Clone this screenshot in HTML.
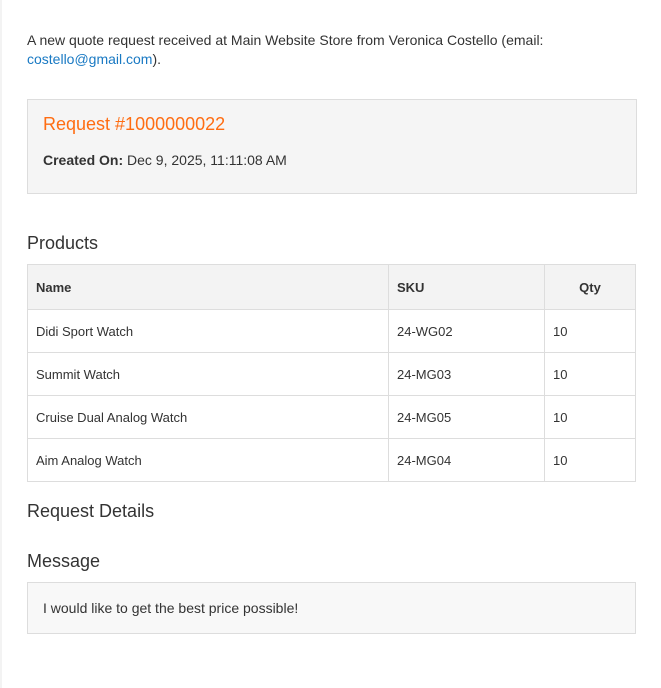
<!DOCTYPE html>
<html><head><meta charset="utf-8"><style>
*{margin:0;padding:0;box-sizing:border-box}
body{width:661px;height:688px;background:#fff;font-family:"Liberation Sans",Arial,sans-serif;color:#333;position:relative;overflow:hidden}
.strip{position:absolute;left:0;top:0;width:2px;height:688px;background:#f3f3f3}
.a{position:absolute}
p.intro{left:27px;top:31px;font-size:14px;line-height:19px;width:600px}
a{color:#1979c3;text-decoration:none}
.box{left:27px;top:99px;width:610px;height:95px;background:#f5f5f5;border:1px solid #ddd}
.title{left:43px;top:114px;font-size:18px;color:#ff6d12}
.created{left:43px;top:152px;font-size:14px}
h2{position:absolute;font-weight:normal;font-size:18px;color:#333;left:27px}
table{position:absolute;left:27px;top:264px;width:609px;border-collapse:collapse;font-size:13px}
td,th{border:1px solid #ddd;padding:0 8px;height:43px;text-align:left;vertical-align:middle}
th{background:#f3f3f3;height:45px;font-weight:bold;font-size:13px}
th.q{text-align:center}
.msg{left:27px;top:582px;width:609px;height:52px;background:#f8f8f8;border:1px solid #ddd;font-size:14px;padding:17px 15px}
</style></head><body>
<div class="strip"></div>
<p class="a intro">A new quote request received at Main Website Store from Veronica Costello (email: <a>costello@gmail.com</a>).</p>
<div class="a box"></div>
<div class="a title">Request #1000000022</div>
<div class="a created"><b>Created On:</b> Dec 9, 2025, 11:11:08 AM</div>
<h2 style="top:233px">Products</h2>
<table>
<tr><th style="width:361px">Name</th><th style="width:156px">SKU</th><th class="q">Qty</th></tr>
<tr><td>Didi Sport Watch</td><td>24-WG02</td><td>10</td></tr>
<tr><td>Summit Watch</td><td>24-MG03</td><td>10</td></tr>
<tr><td>Cruise Dual Analog Watch</td><td>24-MG05</td><td>10</td></tr>
<tr><td>Aim Analog Watch</td><td>24-MG04</td><td>10</td></tr>
</table>
<h2 style="top:501px">Request Details</h2>
<h2 style="top:551px">Message</h2>
<div class="a msg">I would like to get the best price possible!</div>
</body></html>
